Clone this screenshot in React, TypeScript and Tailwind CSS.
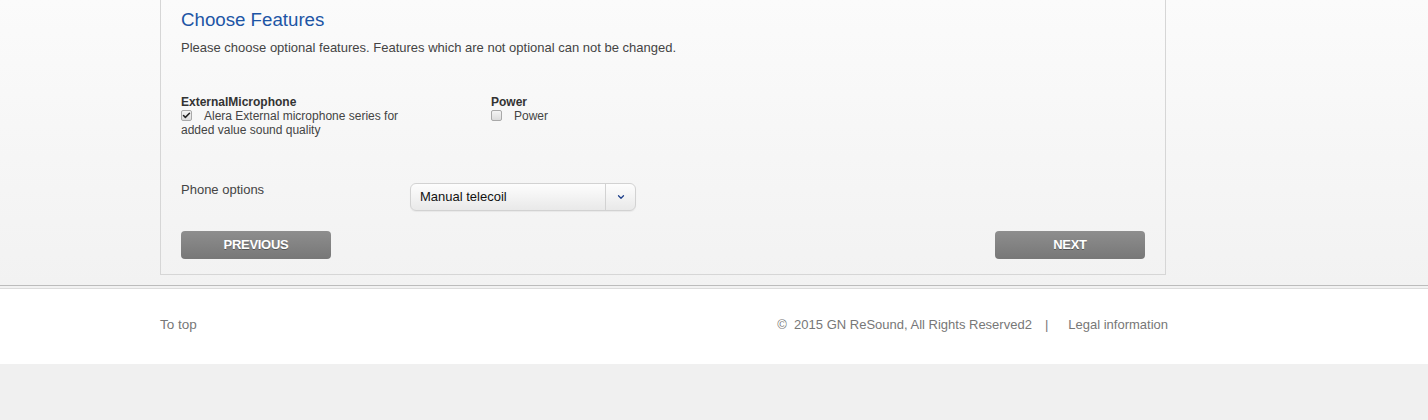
import { Check, ChevronDown } from "lucide-react";

function Box({ checked }: { checked?: boolean }) {
  return (
    <span className="mt-[1px] flex h-[11px] w-[11px] shrink-0 items-center justify-center rounded-[2px] border border-[#a9a9a9] bg-gradient-to-b from-[#f4f4f4] to-[#dcdcdc]">
      {checked && <Check className="h-[9px] w-[9px] text-[#222]" strokeWidth={4} />}
    </span>
  );
}

function GreyButton({ label }: { label: string }) {
  return (
    <button className="h-[28px] w-[150px] rounded-[4px] bg-gradient-to-b from-[#8e8e8e] to-[#777] text-[13px] font-bold text-white [text-shadow:0_1px_0_rgba(0,0,0,0.35)] tracking-[-0.3px]">
      {label}
    </button>
  );
}

export default function App() {
  return (
    <div className="min-h-screen bg-[#f0f0f0] font-['Liberation_Sans',Arial,sans-serif] text-[12px] leading-[14px] text-[#444]">
      <div className="h-[286px] border-b border-[#bcbcbc] bg-gradient-to-b from-[#fbfbfb] to-[#f2f2f2]">
        <div className="mx-auto w-[1108px]">
          <div className="w-[1006px] border-x border-b border-[#d6d6d6] px-[20px] pt-[9px] pb-[15px]">
            <h1 className="text-[18.7px] leading-[22px] text-[#1d55a5]">Choose Features</h1>
            <p className="mt-[10px] text-[13px]">
              Please choose optional features. Features which are not optional can not be changed.
            </p>

            <div className="mt-[40px] flex">
              <div className="w-[310px]">
                <div className="font-bold text-[#333]">ExternalMicrophone</div>
                <div className="w-[236px]">
                  <span className="inline-flex align-top">
                    <Box checked />
                  </span>
                  <span className="ml-[12px]">Alera External microphone series for added value sound quality</span>
                </div>
              </div>
              <div>
                <div className="font-bold text-[#333]">Power</div>
                <div className="flex items-start gap-[12px]">
                  <Box />
                  <span>Power</span>
                </div>
              </div>
            </div>

            <div className="mt-[46px] flex items-start">
              <div className="w-[229px] text-[13px]">Phone options</div>
              <div className="flex h-[28px] w-[226px] items-center rounded-[6px] border border-[#d2d2d2] bg-gradient-to-b from-[#fdfdfd] to-[#e9e9e9] shadow-[0_1px_1px_rgba(0,0,0,0.05)]">
                <span className="flex-1 pl-[9px] text-[13px] text-[#111]">Manual telecoil</span>
                <span className="flex h-full w-[30px] items-center justify-center border-l border-[#d2d2d2]">
                  <ChevronDown className="h-[10px] w-[10px] text-[#1d3f8a]" strokeWidth={3} />
                </span>
              </div>
            </div>

            <div className="mt-[20px] flex justify-between">
              <GreyButton label="PREVIOUS" />
              <GreyButton label="NEXT" />
            </div>
          </div>
        </div>
      </div>
      <div className="h-[2px] bg-[#f2f2f2]" />
      <div className="border-t border-[#dcdcdc] bg-white">
        <div className="mx-auto flex h-[75px] w-[1108px] items-center pb-[4px]">
          <div className="flex w-[1008px] items-center justify-between leading-[16px] text-[#777]">
            <span className="text-[13.5px]">To top</span>
            <span className="flex text-[13px]">
              <span>©&nbsp; 2015 GN ReSound, All Rights Reserved2</span>
              <span className="ml-[13px]">|</span>
              <span className="ml-[20px]">Legal information</span>
            </span>
          </div>
        </div>
      </div>
    </div>
  );
}
